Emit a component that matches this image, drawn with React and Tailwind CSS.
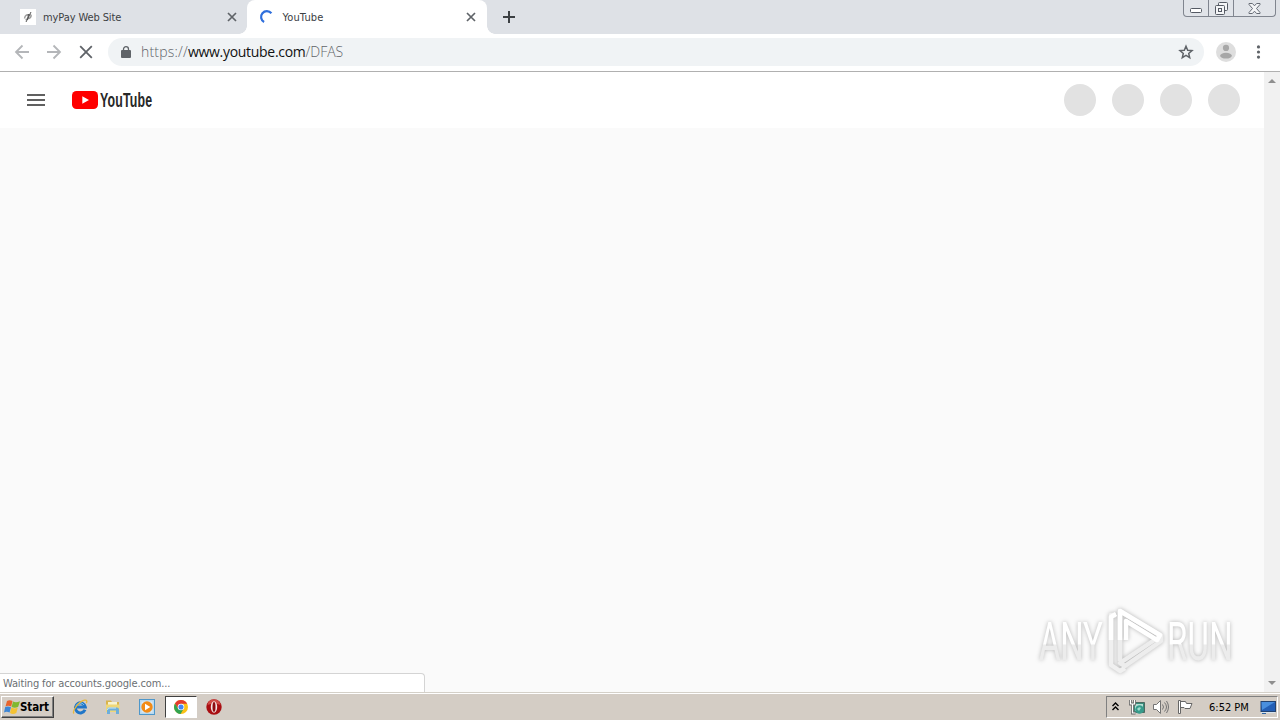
import React from 'react';

const CloseIcon = ({ className }) => (
  <svg className={className} viewBox="0 0 10 10" fill="none" stroke="#5f6368" strokeWidth="1.7">
    <path d="M1 1l8 8M9 1L1 9" />
  </svg>
);

const WindowControls = () => (
  <div className="flex h-[17px] w-[93px] rounded-b-[4px] border border-t-0 border-[#80858f] bg-[#e1e4e9]">
    <div className="flex w-[25px] items-center justify-center border-r border-[#80858f]">
      <svg className="mt-1 h-[5px] w-3" viewBox="0 0 12 5" fill="#fff" stroke="#555a64">
        <rect x="0.5" y="0.5" width="11" height="4" rx="1" />
      </svg>
    </div>
    <div className="flex w-[25px] items-center justify-center border-r border-[#80858f]">
      <svg className="h-[13px] w-[13px]" viewBox="0 0 13 13" fill="#f4f5f7" stroke="#555a64">
        <rect x="3.5" y="0.5" width="9" height="8" rx="1" />
        <rect x="0.5" y="3.5" width="9" height="9" rx="1" />
        <rect x="3.5" y="6.5" width="3" height="3" />
      </svg>
    </div>
    <div className="flex flex-1 items-center justify-center">
      <svg className="h-[11px] w-[13px]" viewBox="0 0 13 11" fill="#f4f5f7" stroke="#666b75">
        <path d="M1 .5h3.4l2.1 2.3L8.600 .5H12v1L8.500 5.500 12 9.500v1H8.600L6.500 8.200 4.400 10.500H1v-1L4.500 5.500 1 1.500z" />
      </svg>
    </div>
  </div>
);

const TabStrip = () => (
  <div className="flex h-[34px] shrink-0 items-start bg-[#dee1e6] font-['DejaVu_Sans_Condensed','DejaVu_Sans',sans-serif] text-[11px] text-[#3c4043]">
    <div className="flex h-[34px] w-[247px] items-center rounded-br-lg pl-5 pr-[10px]">
      <svg className="h-4 w-4" viewBox="0 0 16 16">
        <rect width="16" height="16" fill="#fff" />
        <path d="M4.500 9.500C5 6 7.500 5 8.500 6.500S7 11 5.500 10.500M9 6c3-1 3 2-.5 4" fill="none" stroke="#999" strokeWidth="1.400" />
        <path d="M11 3L6 13M8.500 5L7.500 11" stroke="#555" strokeWidth="1" />
      </svg>
      <span className="ml-[7px] flex-1 whitespace-nowrap pt-[2px] tracking-[-0.1px]">myPay Web Site</span>
      <CloseIcon className="h-[10px] w-[10px]" />
    </div>
    <div className="relative flex h-[34px] w-[240px] items-center rounded-t-lg bg-white pl-[12px] pr-[11px]">
      <div className="absolute bottom-0 -left-2 h-2 w-2 bg-[radial-gradient(circle_at_0_0,transparent_7.5px,white_8px)]" />
      <div className="absolute bottom-0 -right-2 h-2 w-2 bg-[radial-gradient(circle_at_100%_0,transparent_7.5px,white_8px)]" />
      <svg className="h-4 w-4" viewBox="0 0 16 16" fill="none" stroke="#2f6fdc" strokeWidth="2.200">
        <path d="M12.400 4.300A5.800 5.800 0 1 0 5.100 13.020" />
      </svg>
      <span className="ml-[7.5px] flex-1 pt-[2px] tracking-[0.15px]">YouTube</span>
      <CloseIcon className="h-[10px] w-[10px]" />
    </div>
    <div className="flex h-[34px] flex-1 items-center pl-4">
      <svg className="h-3 w-3" viewBox="0 0 12 12" stroke="#3c4043" strokeWidth="2">
        <path d="M6 0v12M0 6h12" />
      </svg>
    </div>
    <div className="pr-1">
      <WindowControls />
    </div>
  </div>
);

const Toolbar = () => (
  <div className="flex h-[38px] shrink-0 items-center border-b border-[#b0b0b0] bg-white pb-px pl-[14px] pr-[14px]">
    <div className="flex gap-4">
      <svg className="h-4 w-4" viewBox="0 0 16 16" fill="none" stroke="#b4b6b9" strokeWidth="1.800">
        <path d="M15 8H2M8.500 1.500L2 8l6.500 6.500" />
      </svg>
      <svg className="h-4 w-4" viewBox="0 0 16 16" fill="none" stroke="#b4b6b9" strokeWidth="1.800">
        <path d="M1 8h13M7.500 1.500L14 8l-6.500 6.500" />
      </svg>
      <svg className="h-4 w-4" viewBox="0 0 16 16" fill="none" stroke="#5f6368" strokeWidth="1.800">
        <path d="M2.200 2.200l11.600 11.600M13.800 2.200L2.200 13.800" />
      </svg>
    </div>
    <div className="ml-[14px] flex h-7 flex-1 items-center rounded-full bg-[#f0f3f5] pl-[13px] pr-[10px]">
      <svg className="h-3 w-[10px]" viewBox="0 0 10 12">
        <rect y="4" width="10" height="8" rx="1" fill="#5f6368" />
        <path d="M2.500 5V3.200a2.500 2.500 0 0 1 5 0V5" fill="none" stroke="#5f6368" strokeWidth="1.300" />
      </svg>
      <span className="ml-[10px] flex-1 whitespace-nowrap pb-[2px] font-['Open_Sans','Noto_Sans',sans-serif] text-[14px] font-light text-[#5f6368]">
        <span className="tracking-[0.2px]">https://</span>
        <span className="font-normal tracking-[-0.3px] text-[#111]">www.youtube.com</span>/DFAS
      </span>
      <svg className="h-4 w-4" viewBox="0 0 16 16" fill="none" stroke="#5f6368" strokeWidth="1.500">
        <path d="M8 2.200l1.700 4 4.300.4-3.300 2.800 1 4.200L8 11.400l-3.700 2.200 1-4.200L2 6.600l4.300-.4z" />
      </svg>
    </div>
    <svg className="ml-3 h-5 w-5" viewBox="0 0 20 20" fill="#a7a7a7">
      <circle cx="10" cy="10" r="10" fill="#dedede" />
      <circle cx="10" cy="5.900" r="3.100" />
      <ellipse cx="10" cy="13.700" rx="5.900" ry="2.900" />
    </svg>
    <svg className="ml-[14px] h-4 w-4" viewBox="0 0 16 16" fill="#5f6368">
      <circle cx="8.500" cy="2.900" r="1.600" />
      <circle cx="8.500" cy="8" r="1.600" />
      <circle cx="8.500" cy="13.100" r="1.600" />
    </svg>
  </div>
);

const YouTubeLogo = () => (
  <svg className="h-[26px] w-[88px]" viewBox="0 0 88 26">
    <rect y="4" width="26" height="18" rx="4.500" fill="#f00" />
    <path d="M10.300 9.200l6.700 3.800-6.700 3.800z" fill="#fff" />
    <text transform="translate(28 20) scale(0.62 1)" textLength="84" fill="#282828" fontFamily="'Liberation Sans', sans-serif" fontWeight="700" fontSize="20">
      YouTube
    </text>
  </svg>
);

const Watermark = () => (
  <svg className="absolute bottom-[12px] right-[35px] h-[80px] w-[216px] drop-shadow-[0_0_2px_rgba(0,0,0,0.28)]" viewBox="0 0 216 80">
    <defs>
      <linearGradient id="wm" x1="0" y1="0" x2="0" y2="1">
        <stop offset="0.53" stopColor="#fff" />
        <stop offset="0.55" stopColor="#ececec" />
      </linearGradient>
    </defs>
    <g fill="url(#wm)" fontFamily="Roboto, sans-serif" fontSize="53">
      <text transform="translate(10 60) scale(0.62 1)" textLength="103">ANY</text>
      <text transform="translate(138 60) scale(0.62 1)" textLength="106">RUN</text>
    </g>
    <g fill="none" strokeWidth="4.500" strokeLinejoin="round">
      <path d="M87 15h-5v50l9 6 5-3" stroke="#f0f0f0" />
      <path d="M91 61V11l41 25v5L96 66l-5-3 36-24" stroke="#ededed" />
      <path d="M91 40V11l40 24-3 5-31-19v19M82 40V17l5-3" stroke="#fff" />
    </g>
  </svg>
);

const PageView = () => (
  <div className="relative flex min-h-0 flex-1 bg-[#fafafa]">
    <div className="flex-1">
      <header className="flex h-14 items-center bg-white pl-[27px] pr-6">
        <div className="flex w-[18px] flex-col gap-[3px]">
          <div className="h-[2px] bg-[#606060]" />
          <div className="h-[2px] bg-[#606060]" />
          <div className="h-[2px] bg-[#606060]" />
        </div>
        <div className="ml-[27px] flex-1">
          <YouTubeLogo />
        </div>
        <div className="flex gap-4">
          {[0, 1, 2, 3].map((i) => (
            <div key={i} className="h-8 w-8 rounded-full bg-[#e2e2e2]" />
          ))}
        </div>
      </header>
    </div>
    <div className="flex w-4 flex-col items-center justify-between bg-[#f1f1f1] py-[7px]">
      <svg className="h-1 w-2" viewBox="0 0 8 4" fill="#8f8f8f"><path d="M0 4l4-4 4 4z" /></svg>
      <svg className="h-1 w-2" viewBox="0 0 8 4" fill="#8f8f8f"><path d="M0 0l4 4 4-4z" /></svg>
    </div>
    <Watermark />
    <div className="absolute bottom-0 left-0 flex h-[19px] w-[425px] items-center rounded-tr-[4px] border-r border-t border-[#d4d4d4] bg-white pl-[3px] pt-[2px] font-['DejaVu_Sans_Condensed','DejaVu_Sans',sans-serif] text-[11px] text-[#6b6f73]">
      <span className="whitespace-nowrap tracking-[-0.14px]">Waiting for accounts.google.com...</span>
    </div>
  </div>
);

const StartFlag = () => (
  <svg className="h-4 w-4" viewBox="0 0 16 16">
    <path d="M3 2Q5.500.5 8.500 2L7.200 7.500Q4 6.200 1.500 7.500z" fill="#e8642c" />
    <path d="M9 2.500q3 1.500 7-.3l-1.800 5.500Q11 9.500 7.600 8z" fill="#80b82f" />
    <path d="M1.200 8Q4 6.800 7 8.200L5.600 13.500Q2.500 12 0 13.500z" fill="#3e86d5" />
    <path d="M7.400 8.600Q10.500 10.300 13.800 8.500L12.300 13.900Q9 15.800 6 14z" fill="#f4c233" />
  </svg>
);

const ExplorerIcon = () => (
  <svg className="h-4 w-4" viewBox="0 0 16 16" fill="none">
    <path d="M13 10.800a5 5 0 1 1 .3-2.800H5" stroke="#2076c8" strokeWidth="3" />
    <path d="M4 7c1-3 6-4.500 8-1" stroke="#75c6f4" strokeWidth="1" />
    <path d="M2 14.500C-.5 12 7 2.500 12.500 1.200c2.700-.5 2.700 1.300 1.700 3" stroke="#e8b83a" strokeWidth="1.300" />
  </svg>
);

const FolderIcon = () => (
  <svg className="h-4 w-4" viewBox="0 0 16 16">
    <path d="M1 1.500h5l1 1.500h7v9H1z" fill="#d9b44c" />
    <path d="M3 3h9v5H3z" fill="#f8f3cf" />
    <path d="M1 5.500h13.500V13H1z" fill="#efd777" />
    <path d="M2 15v-4.500q0-2 2-2h8q2 0 2 2V15h-3v-3.500H5V15z" fill="#6daedb" />
    <path d="M2.500 11q0-2 1.500-2h7" stroke="#c8e8f6" fill="none" />
  </svg>
);

const PlayerIcon = () => (
  <svg className="h-4 w-4" viewBox="0 0 16 16">
    <rect x=".5" y=".5" width="15" height="15" fill="#b8d9ef" stroke="#4e97ca" />
    <rect x="2.500" y="2.500" width="11" height="11" fill="#dceaf4" />
    <circle cx="8" cy="8" r="5.700" fill="#f28b16" />
    <path d="M6 4.700l5.300 3.300L6 11.300z" fill="#fff" />
  </svg>
);

const ChromeIcon = () => (
  <svg className="h-[14px] w-[14px]" viewBox="0 0 16 16">
    <circle cx="8" cy="8" r="8" fill="#fbc116" />
    <path d="M8 4.300h7A8 8 0 0 0 1.100 4L4.800 10z" fill="#e33b2e" />
    <path d="M1.100 4A8 8 0 0 0 7.500 16L11 10 4.800 10z" fill="#31a350" />
    <circle cx="8" cy="8" r="3.800" fill="#fff" />
    <circle cx="8" cy="8" r="2.900" fill="#4285f4" />
  </svg>
);

const OperaIcon = () => (
  <svg className="h-4 w-4" viewBox="0 0 16 16">
    <circle cx="8" cy="8" r="7.700" fill="#a90e12" />
    <path d="M1.500 6a6.600 6.600 0 0 1 13 0q-6.500-3-13 0z" fill="#d14b46" />
    <ellipse cx="8" cy="8" rx="3.200" ry="5.700" fill="#f4e7e6" />
    <ellipse cx="8" cy="8" rx="1.500" ry="4.900" fill="#8e0c10" />
  </svg>
);

const Tray = () => (
  <div className="mr-[2px] flex h-[22px] w-[172px] items-center border border-b-white border-l-[#808080] border-r-white border-t-[#808080] pl-[5px] pr-px">
    <svg className="mb-[2px] h-[9px] w-[7px]" viewBox="0 0 7 9" fill="none" stroke="#000" strokeWidth="1.400">
      <path d="M.5 4l3-3 3 3M.5 8l3-3 3 3" />
    </svg>
    <svg className="ml-[10px] h-4 w-4" viewBox="0 0 16 16">
      <path d="M4.500 3.500h11v10h-11z" fill="#378b79" stroke="#4c6962" />
      <path d="M6 5h8v7H6z" fill="#b4ded5" />
      <circle cx="10.500" cy="10.500" r="4.300" fill="#379b8b" />
      <path d="M8 10q2-3 4-1l-2 3z" fill="#a0dccf" />
      <path d="M1.500 1v4h4V1M3.500 5v9h3" stroke="#666" strokeWidth="2.800" fill="none" />
      <path d="M1.500 1v4h4V1M3.500 5v9h3" stroke="#fff" strokeWidth="1.200" fill="none" />
    </svg>
    <svg className="ml-2 h-4 w-4" viewBox="0 0 16 16" fill="none" stroke="#737373">
      <path d="M.5 5.500h3l4-4v13l-4-4h-3z" fill="#fff" />
      <path d="M9.500 5.500q2 2.500 0 5M11.500 3.500q4 4.500 0 9M13.500 2q4 6 0 12" />
    </svg>
    <svg className="ml-2 h-4 w-4" viewBox="0 0 16 16" fill="#fff" stroke="#666">
      <path d="M1.500 1.500h2v13h-2zM3.500 2.500h5l1 2h5.500l-2 5H8l-1-1H3.500z" />
    </svg>
    <span className="ml-[16px] flex-1 whitespace-nowrap pt-[2px]">6:52 PM</span>
    <svg className="h-4 w-4" viewBox="0 0 16 16">
      <rect x="1" y="2.500" width="14.500" height="10" fill="#245fb5" stroke="#23426e" />
      <path d="M1.500 3H15L2 11z" fill="#4a8fdd" />
      <path d="M1 13.500h14" stroke="#d7e3ed" />
      <path d="M2 14.500h4" stroke="#2f65a5" />
    </svg>
  </div>
);

const Taskbar = () => (
  <div className="flex h-7 shrink-0 items-center border-t border-[#d4d0c8] bg-[#d4cdc5] pt-[1px] font-['DejaVu_Sans_Condensed','DejaVu_Sans',sans-serif] text-[11px] text-black shadow-[inset_0_1px_0_#fff]">
    <button className="ml-px flex h-[22px] w-[53px] items-center border border-b-[#404040] border-l-white border-r-[#404040] border-t-white pl-[2px] shadow-[inset_-1px_-1px_0_#808080]">
      <StartFlag />
      <span className="whitespace-nowrap pt-px text-[11.5px] font-bold tracking-[-0.1px]">Start</span>
    </button>
    <div className="ml-[18px] flex flex-1 items-center">
      <ExplorerIcon />
      <div className="ml-[17px]"><FolderIcon /></div>
      <div className="ml-[18px]"><PlayerIcon /></div>
      <div className="ml-[10px] flex h-[22px] w-8 items-center justify-center border border-b-white border-l-[#404040] border-r-white border-t-[#404040] bg-white">
        <ChromeIcon />
      </div>
      <div className="ml-[9px]"><OperaIcon /></div>
    </div>
    <Tray />
  </div>
);

const App = () => (
  <div className="flex h-[720px] w-[1280px] flex-col overflow-hidden bg-white">
    <TabStrip />
    <Toolbar />
    <PageView />
    <Taskbar />
  </div>
);

export default App;
